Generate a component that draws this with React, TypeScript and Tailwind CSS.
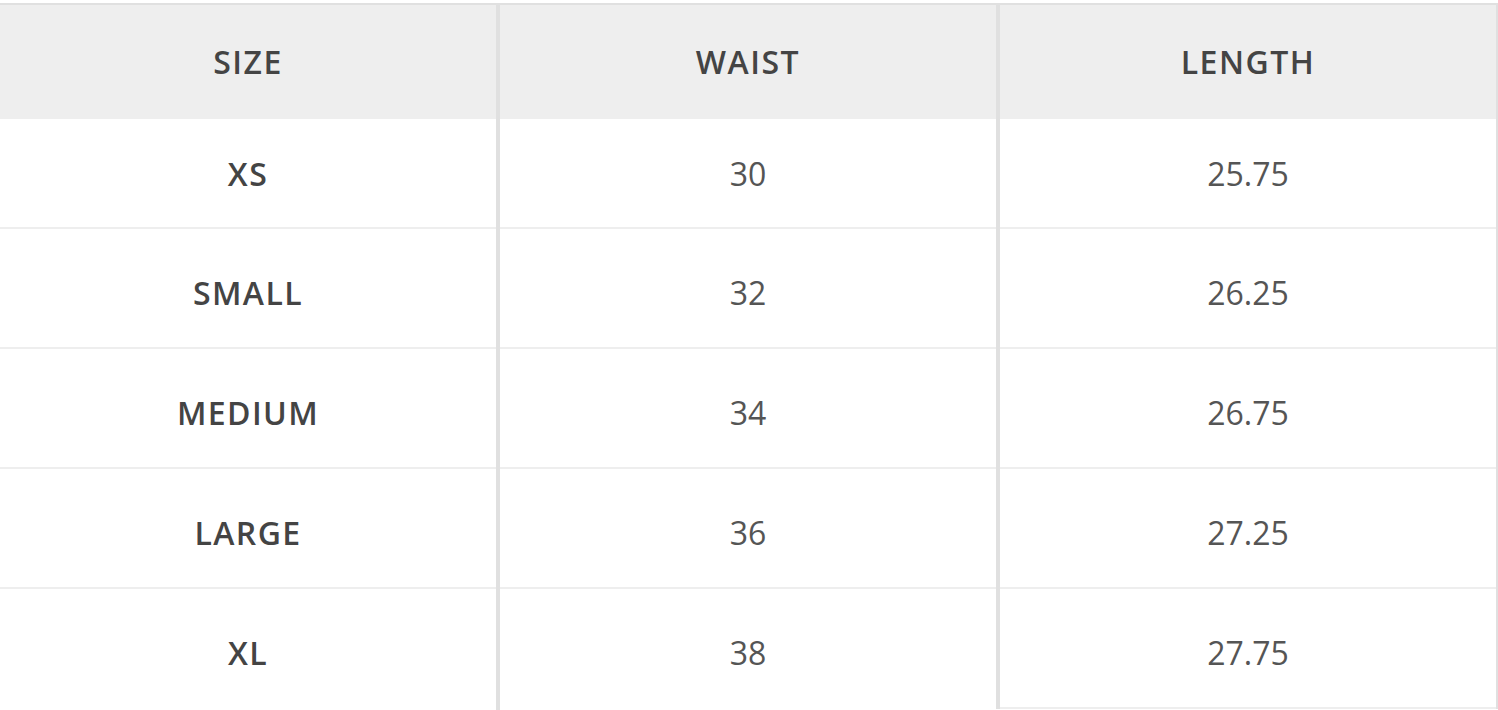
import React from 'react';

const rows = [
  { size: 'XS', waist: '30', length: '25.75' },
  { size: 'SMALL', waist: '32', length: '26.25' },
  { size: 'MEDIUM', waist: '34', length: '26.75' },
  { size: 'LARGE', waist: '36', length: '27.25' },
  { size: 'XL', waist: '38', length: '27.75' },
];

export default function App() {
  return (
    <div
      className="w-[1498px] h-[710px] overflow-hidden bg-white pt-[3px]"
      style={{ fontFamily: '"Open Sans", "Noto Sans", sans-serif' }}
    >
      <div className="border-t-2 border-[#e0e0e0]">
        {/* header */}
        <div className="flex bg-[#eeeeee] text-[#444444] text-[32px] font-semibold tracking-[1.5px]">
          <div className="w-[496px] h-[114px] flex items-center justify-center">SIZE</div>
          <div className="w-[500px] h-[114px] border-l-4 border-[#e0e0e0] flex items-center justify-center">WAIST</div>
          <div className="w-[502px] h-[114px] border-l-4 border-r-2 border-[#e0e0e0] flex items-center justify-center">LENGTH</div>
        </div>

        {rows.map((row, i) => {
          const first = i === 0;
          const last = i === rows.length - 1;
          const h = first ? 'h-[110px] pt-[2px]' : 'h-[120px] pt-[10px]';
          // the last row runs past the bottom edge in the first two columns
          const open = last ? 'h-[140px] pt-[10px] pb-[22px]' : `${h} border-b-2 border-[#eeeeee]`;
          return (
            <div key={row.size} className="flex text-[32px]">
              <div className="w-[496px]">
                <div className={`${open} flex items-center justify-center font-semibold tracking-[1.4px] text-[#444444]`}>
                  {row.size}
                </div>
              </div>
              <div className="w-[500px] border-l-4 border-[#e0e0e0]">
                <div className={`${open} flex items-center justify-center text-[#555555]`}>
                  {row.waist}
                </div>
              </div>
              <div className="w-[502px] border-l-4 border-r-2 border-[#e0e0e0] self-start">
                <div className={`${h} flex items-center justify-center text-[#555555] border-b-2 border-[#eeeeee]`}>
                  {row.length}
                </div>
              </div>
            </div>
          );
        })}
      </div>
    </div>
  );
}
